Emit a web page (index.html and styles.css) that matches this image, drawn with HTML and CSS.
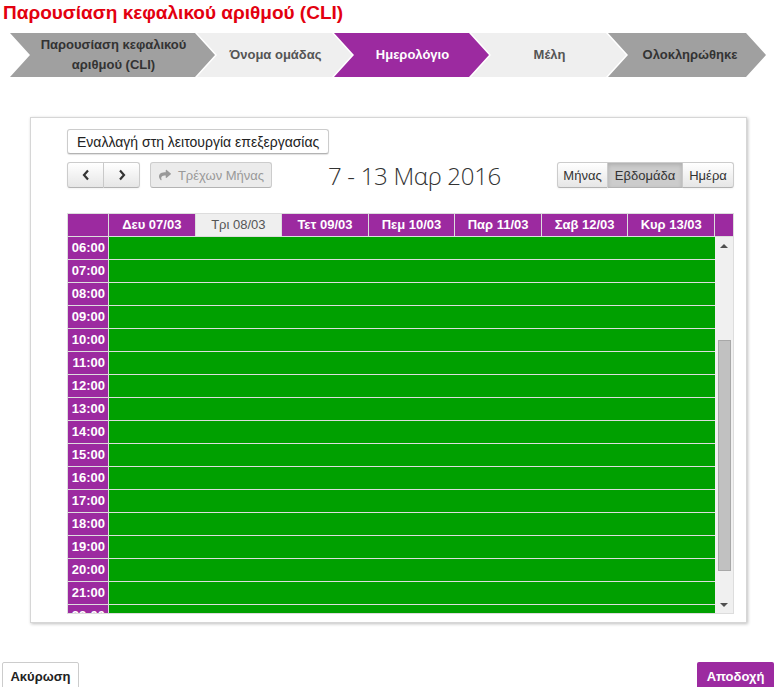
FILE: index.html
```html
<!DOCTYPE html>
<html lang="el">
<head>
  <meta charset="UTF-8" />
  <title>Παρουσίαση κεφαλικού αριθμού (CLI)</title>
  <link rel="stylesheet" href="styles.css">
</head>
<body>

  <h1 class="page-title">Παρουσίαση κεφαλικού αριθμού (CLI)</h1>

  <ol class="wizard">
    <li class="step step-done">Παρουσίαση κεφαλικού<br>αριθμού (CLI)</li>
    <li class="step step-todo">Όνομα ομάδας</li>
    <li class="step step-active">Ημερολόγιο</li>
    <li class="step step-todo">Μέλη</li>
    <li class="step step-done">Ολοκληρώθηκε</li>
  </ol>

  <div class="panel">
    <button class="btn btn-edit">Εναλλαγή στη λειτουργία επεξεργασίας</button>

    <div class="toolbar">
      <div class="btn-group">
        <button class="fc-btn fc-prev">
          <svg width="8" height="12" viewBox="0 0 8 12"><polyline points="6,1.5 2,6 6,10.5" fill="none" stroke="#333" stroke-width="2.2"/></svg>
        </button>
        <button class="fc-btn fc-next">
          <svg width="8" height="12" viewBox="0 0 8 12"><polyline points="2,1.5 6,6 2,10.5" fill="none" stroke="#333" stroke-width="2.2"/></svg>
        </button>
      </div>
      <button class="fc-btn fc-today" disabled>
        <svg width="14" height="12" viewBox="0 0 512 512"><path fill="#999" d="M503.7 189.8L327.7 37.9C312.3 24.5 288 35.3 288 56v80.1C127.4 137.9 0 170.1 0 322.3c0 61.4 39.6 122.3 83.3 154.1 13.700 9.9 33.1-2.5 28.1-18.6C66.1 312.8 132.9 274.3 288 272.1V360c0 20.7 24.3 31.5 39.7 18.2l176-152c11.1-9.6 11.1-26.8 0-36.4z"/></svg>
        Τρέχων Μήνας
      </button>
      <h2 class="fc-title">7 - 13 Μαρ 2016</h2>
      <div class="btn-group">
        <button class="fc-btn fc-month">Μήνας</button>
        <button class="fc-btn fc-week active">Εβδομάδα</button>
        <button class="fc-btn fc-day">Ημέρα</button>
      </div>
    </div>

    <div class="calendar">
      <div class="cal-head">
        <div class="head-cell"></div>
        <div class="head-cell">Δευ 07/03</div>
        <div class="head-cell today">Τρι 08/03</div>
        <div class="head-cell">Τετ 09/03</div>
        <div class="head-cell">Πεμ 10/03</div>
        <div class="head-cell">Παρ 11/03</div>
        <div class="head-cell">Σαβ 12/03</div>
        <div class="head-cell">Κυρ 13/03</div>
        <div class="head-cell"></div>
      </div>
      <div class="cal-body">
        <div class="cal-rows">
          <div class="cal-row"><div class="time">06:00</div><div class="slot"></div></div>
          <div class="cal-row"><div class="time">07:00</div><div class="slot"></div></div>
          <div class="cal-row"><div class="time">08:00</div><div class="slot"></div></div>
          <div class="cal-row"><div class="time">09:00</div><div class="slot"></div></div>
          <div class="cal-row"><div class="time">10:00</div><div class="slot"></div></div>
          <div class="cal-row"><div class="time">11:00</div><div class="slot"></div></div>
          <div class="cal-row"><div class="time">12:00</div><div class="slot"></div></div>
          <div class="cal-row"><div class="time">13:00</div><div class="slot"></div></div>
          <div class="cal-row"><div class="time">14:00</div><div class="slot"></div></div>
          <div class="cal-row"><div class="time">15:00</div><div class="slot"></div></div>
          <div class="cal-row"><div class="time">16:00</div><div class="slot"></div></div>
          <div class="cal-row"><div class="time">17:00</div><div class="slot"></div></div>
          <div class="cal-row"><div class="time">18:00</div><div class="slot"></div></div>
          <div class="cal-row"><div class="time">19:00</div><div class="slot"></div></div>
          <div class="cal-row"><div class="time">20:00</div><div class="slot"></div></div>
          <div class="cal-row"><div class="time">21:00</div><div class="slot"></div></div>
          <div class="cal-row"><div class="time">22:00</div><div class="slot"></div></div>
        </div>
        <div class="scrollbar">
          <div class="sb-btn"><span class="arrow-up"></span></div>
          <div class="sb-track"><div class="sb-thumb"></div></div>
          <div class="sb-btn"><span class="arrow-down"></span></div>
        </div>
      </div>
    </div>
  </div>

  <div class="footer">
    <button class="btn-cancel">Ακύρωση</button>
    <button class="btn-accept">Αποδοχή</button>
  </div>

</body>
</html>
```

FILE: styles.css
```css
* { margin: 0; padding: 0; box-sizing: border-box; }
body {
  font-family: 'Liberation Sans', Arial, sans-serif;
  font-size: 13px;
  color: #333;
  background: #fff;
  width: 777px;
  height: 687px;
  overflow: hidden;
}
button { font-family: inherit; font-size: 13px; }

.page-title {
  font-size: 19px;
  line-height: 24px;
  color: #e3000f;
  padding: 1px 0 0 3px;
}

/* wizard steps */
.wizard {
  display: flex;
  list-style: none;
  margin: 8px 0 0 10px;
  height: 44px;
}
.step {
  width: 155px;
  height: 44px;
  margin-left: -18px;
  padding: 0 22px 0 24px;
  display: flex;
  align-items: center;
  justify-content: center;
  text-align: center;
  font-weight: bold;
  line-height: 20px;
  clip-path: polygon(0 0, calc(100% - 20px) 0, 100% 50%, calc(100% - 20px) 100%, 0 100%, 20px 50%);
}
.step:first-child { margin-left: 0; width: 205px; }
.step:last-child { width: 158px; padding-left: 28px; }
.step-done { background: #a0a0a0; color: #333; }
.step-todo { background: #efefef; color: #555; }
.step-active { background: #9c2aa0; color: #fff; }

/* panel */
.panel {
  margin: 40px 0 0 30px;
  width: 717px;
  height: 506px;
  border: 1px solid #d6d6d6;
  box-shadow: 1px 1px 3px rgba(0, 0, 0, 0.25);
  padding: 11px 12px 0 36px;
}
.btn-edit {
  height: 25px;
  padding: 0 9px;
  font-size: 14px;
  background: #fff;
  color: #222;
  border: 1px solid #ccc;
  border-bottom-color: #b3b3b3;
  border-radius: 3px;
  box-shadow: 0 1px 1px rgba(0, 0, 0, 0.12);
}

.toolbar {
  display: flex;
  align-items: center;
  height: 26px;
  margin-top: 8px;
}
.btn-group { display: flex; }
.fc-btn {
  height: 26px;
  background: linear-gradient(#fff, #e6e6e6);
  border: 1px solid #ccc;
  border-bottom-color: #b3b3b3;
  color: #333;
  display: flex;
  align-items: center;
  justify-content: center;
  box-shadow: inset 0 1px 0 rgba(255, 255, 255, 0.2), 0 1px 2px rgba(0, 0, 0, 0.05);
}
.fc-prev { width: 37px; border-radius: 3px 0 0 3px; }
.fc-next { width: 36px; border-left: none; border-radius: 0 3px 3px 0; }
.fc-today {
  width: 122px;
  margin-left: 10px;
  gap: 6px;
  border-radius: 3px;
  background: #ebebeb;
  color: #999;
  box-shadow: none;
}
.fc-title {
  flex: 1;
  text-align: center;
  font-family: 'Open Sans', sans-serif;
  font-weight: 300;
  font-size: 24px;
  color: #333;
  letter-spacing: -0.3px;
}
.fc-month { width: 51px; border-radius: 3px 0 0 3px; }
.fc-week { width: 75px; border-left: none; }
.fc-day { width: 51px; border-left: none; border-radius: 0 3px 3px 0; }
.fc-week.active {
  background: #ccc;
  box-shadow: inset 0 2px 4px rgba(0, 0, 0, 0.15);
}

/* calendar */
.calendar {
  margin-top: 25px;
  width: 667px;
  border: 1px solid #ddd;
}
.cal-head {
  display: grid;
  grid-template-columns: 41px repeat(7, 1fr) 18px;
  border-bottom: 1px solid #ddd;
}
.head-cell {
  height: 22px;
  line-height: 22px;
  background: #9c2aa0;
  color: #fff;
  font-size: 13px;
  font-weight: bold;
  text-align: center;
  border-right: 1px solid #ddd;
}
.head-cell:last-child { border-right: none; }
.head-cell.today {
  background: #efefef;
  color: #555;
  font-size: 13px;
  font-weight: normal;
}
.cal-body { display: flex; height: 376px; }
.cal-rows { flex: 1; overflow: hidden; }
.cal-row {
  display: grid;
  grid-template-columns: 41px 1fr;
  height: 23px;
  border-bottom: 1px solid #ddd;
}
.time {
  background: #9c2aa0;
  color: #fff;
  font-size: 13px;
  font-weight: bold;
  line-height: 22px;
  text-align: right;
  padding-right: 3px;
  border-right: 1px solid #ddd;
}
.slot { background: #00a000; }

.scrollbar {
  width: 18px;
  background: #f0f0f0;
  display: flex;
  flex-direction: column;
}
.sb-btn {
  height: 17px;
  display: flex;
  align-items: center;
  justify-content: center;
}
.arrow-up, .arrow-down {
  width: 0; height: 0;
  border-left: 4px solid transparent;
  border-right: 4px solid transparent;
}
.arrow-up { border-bottom: 4px solid #505050; }
.arrow-down { border-top: 4px solid #505050; }
.sb-track { flex: 1; }
.sb-thumb {
  margin: 86px 0 0 3px;
  width: 13px;
  height: 231px;
  background: #c1c1c1;
  border: 1px solid #a8a8a8;
}

/* footer */
.footer {
  display: flex;
  justify-content: space-between;
  margin-top: 39px;
  padding: 0 3px 0 2px;
}
.btn-cancel {
  width: 77px;
  height: 28px;
  background: #fff;
  color: #222;
  font-weight: bold;
  border: 1px solid #ccc;
  border-radius: 2px;
}
.btn-accept {
  width: 77px;
  height: 28px;
  background: #9c2aa0;
  color: #fff;
  font-weight: bold;
  border: none;
  border-radius: 2px;
}
```
